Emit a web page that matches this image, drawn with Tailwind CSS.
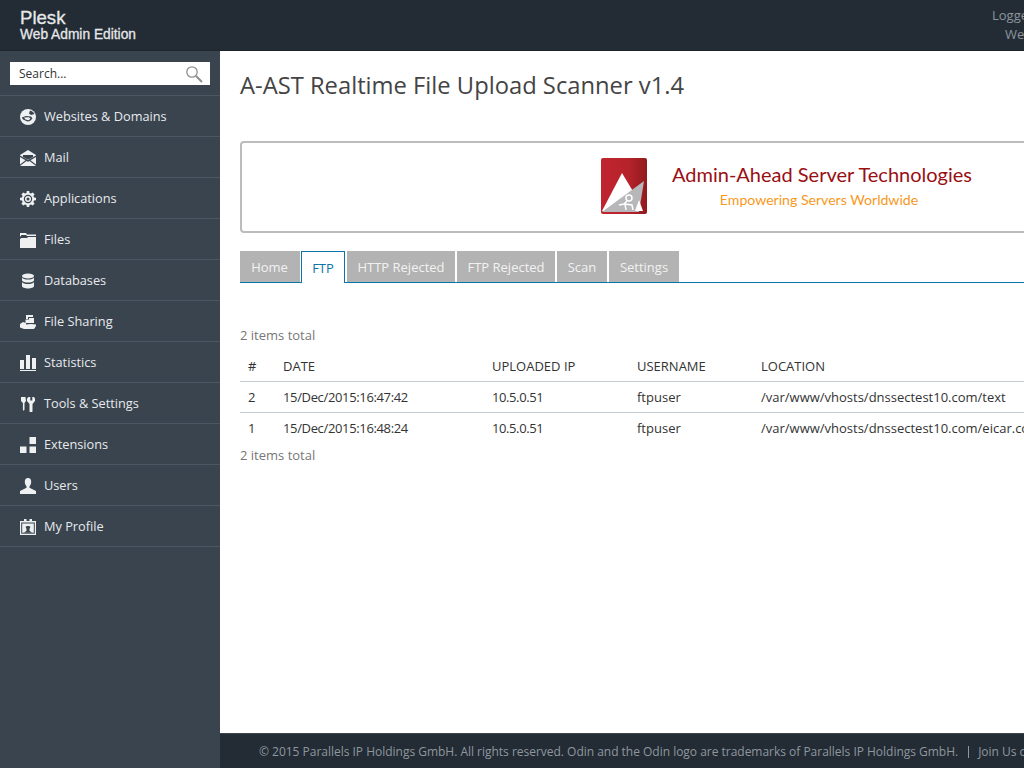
<!DOCTYPE html>
<html lang="en">
<head>
<meta charset="utf-8">
<title>A-AST Realtime File Upload Scanner</title>
<script src="https://cdn.jsdelivr.net/npm/@tailwindcss/browser@4"></script>
</head>
<body class="h-[768px] w-[1024px] overflow-hidden bg-white font-['Open_Sans',sans-serif] text-[13px] text-[#333]">
  <!-- top bar -->
  <header class="flex h-[51px] justify-between overflow-hidden border-b border-[#1d252c] bg-[#232c35]">
    <div class="pl-5 pt-[8px] font-['Liberation_Sans',sans-serif] text-[#e6e8ea] [-webkit-text-stroke:0.3px]">
      <div class="text-[18.6px] leading-[20px]">Plesk</div>
      <div class="text-[13.75px] leading-[14px]">Web Admin Edition</div>
    </div>
    <div class="w-[32px] shrink-0 pt-[6px] text-[13px] leading-[19px] text-[#8d959c]">
      <div class="whitespace-nowrap">Logged in as</div>
      <div class="whitespace-nowrap pl-[13px]">Web Admin</div>
    </div>
  </header>

  <div class="flex h-[717px]">
    <!-- sidebar -->
    <aside class="w-[220px] shrink-0 bg-[#39444f] text-[12.75px] text-[#e8eaec]">
      <div class="h-[45px] border-b border-[#4b5763] px-[10px] pt-[11px]">
        <div class="flex h-[23px] items-center justify-between bg-white pl-[9px] pr-[7px] text-[#333]">
          <span class="text-[12px]">Search...</span>
          <svg class="h-[18px] w-[18px]" viewBox="0 0 18 18" fill="none" stroke="#8e8e8e"><circle cx="7" cy="7" r="5.2" stroke-width="1.3"/><path d="M11 11l6 6" stroke-width="2"/></svg>
        </div>
      </div>
      <nav>
        <a class="flex h-[41px] items-center gap-2 border-b border-[#4b5763] pl-5 pt-[2px]">
          <svg class="h-4 w-4" viewBox="0 0 16 16"><circle cx="8" cy="8" r="8" fill="#eef0f1"/><path d="M10 1.500c2 .5 3.500 1.500 4.500 3.500L11 6 9 4.500zM6 7l5 .5 1.500 2-2.500 2.500-2.500.5L3 10.500 1.800 8.500z" fill="#39444f"/><path d="M4 8.500l5-.2 1.500 1.500-2 1.500-3-.8z" fill="#eef0f1"/></svg>
          <span>Websites &amp; Domains</span>
        </a>
        <a class="flex h-[41px] items-center gap-2 border-b border-[#4b5763] pl-5 pt-[2px]">
          <svg class="h-4 w-4" viewBox="0 0 16 16"><path d="M8 0l8 5v.5L8 10 0 5.500V5z" fill="#eef0f1"/><path d="M3 5h10v2L8 9.800 3 7z" fill="#39444f"/><path d="M0 7l5.500 3.200L0 14.500zM16 7l-5.500 3.200 5.500 4.300zM6.500 11L8 11.800 9.500 11l6 4.500v.5H.5v-.5z" fill="#eef0f1"/></svg>
          <span>Mail</span>
        </a>
        <a class="flex h-[41px] items-center gap-2 border-b border-[#4b5763] pl-5 pt-[2px]">
          <svg class="h-4 w-4" viewBox="0 0 16 16"><path d="M6.800 0h2.400l.3 2 1.500.6L12.700 1.400l1.900 1.900-1.200 1.700.6 1.500 2 .3v2.400l-2 .3-.6 1.500 1.200 1.700-1.900 1.900-1.700-1.200-1.500.6-.3 2H6.800l-.3-2-1.500-.6-1.700 1.200-1.900-1.900 1.200-1.700-.6-1.500-2-.3V6.800l2-.3.6-1.500-1.200-1.700 1.900-1.900L5 2.600l1.500-.6z" fill="#eef0f1"/><circle cx="8" cy="8" r="4.200" fill="#39444f"/><circle cx="8" cy="8" r="3" fill="#eef0f1"/><circle cx="8" cy="8" r="1.500" fill="#39444f"/></svg>
          <span>Applications</span>
        </a>
        <a class="flex h-[41px] items-center gap-2 border-b border-[#4b5763] pl-5 pt-[2px]">
          <svg class="h-4 w-4" viewBox="0 0 16 16"><path d="M0 1h6l1 1.500h9V4H7L6 3H1.500L0 5z" fill="#eef0f1"/><path d="M0 7l1.500-1H7l1-1h8v11H0z" fill="#eef0f1"/></svg>
          <span>Files</span>
        </a>
        <a class="flex h-[41px] items-center gap-2 border-b border-[#4b5763] pl-5 pt-[2px]">
          <svg class="h-4 w-4" viewBox="0 0 16 16" fill="#eef0f1"><ellipse cx="8" cy="3" rx="6" ry="2.500"/><path d="M2 4.500c1 1.500 3 2 6 2s5-.5 6-2v3c-1 1.500-3 2-6 2s-5-.5-6-2zM2 9c1 1.500 3 2 6 2s5-.5 6-2v4c0 1.500-3 2.500-6 2.500S2 14.500 2 13z"/></svg>
          <span>Databases</span>
        </a>
        <a class="flex h-[41px] items-center gap-2 border-b border-[#4b5763] pl-5 pt-[2px]">
          <svg class="h-4 w-4" viewBox="0 0 16 16" fill="#eef0f1"><path d="M6 1h7v2H8v2H6zM9 4h5v5H9zM0 10l3-2 3 1v1.500L11 10l5 .5V12l-2 3H4l-4-1.500z"/><path d="M5.500 5.500H14V9H5.500z"/></svg>
          <span>File Sharing</span>
        </a>
        <a class="flex h-[41px] items-center gap-2 border-b border-[#4b5763] pl-5 pt-[2px]">
          <svg class="h-4 w-4" viewBox="0 0 16 16" fill="#eef0f1"><path d="M0 5h4v9H0zM6 0h4v14H6zM12 3h4v11h-4zM0 15h16v1H0z"/></svg>
          <span>Statistics</span>
        </a>
        <a class="flex h-[41px] items-center gap-2 border-b border-[#4b5763] pl-5 pt-[2px]">
          <svg class="h-4 w-4" viewBox="0 0 16 16" fill="#eef0f1"><path d="M1 1h4.500l.5 4-1.500 2v6.500l-.8 1.500-.8-1.500V7L1 5z"/><path d="M8.500 1l1.800 0v3.500h2V1H14l1 1.500V5l-2.500 3v7a1.500 1.500 0 0 1-3 0V8L7 5V2.500z"/></svg>
          <span>Tools &amp; Settings</span>
        </a>
        <a class="flex h-[41px] items-center gap-2 border-b border-[#4b5763] pl-5 pt-[2px]">
          <svg class="h-4 w-4" viewBox="0 0 16 16" fill="#eef0f1"><path d="M0 9.500h6.500V16H0zM9.500 0H16v7H9.500zM9.500 9.500H16V16H9.500z"/></svg>
          <span>Extensions</span>
        </a>
        <a class="flex h-[41px] items-center gap-2 border-b border-[#4b5763] pl-5 pt-[2px]">
          <svg class="h-4 w-4" viewBox="0 0 16 16" fill="#eef0f1"><path d="M8 0c2.200 0 3.200 1.700 3.200 3.800 0 2-.9 3.700-1.700 4.500v1.500L16 13v3H0v-3l6.500-3.200V8.300C5.700 7.500 4.800 5.800 4.800 3.800 4.800 1.700 5.800 0 8 0z"/></svg>
          <span>Users</span>
        </a>
        <a class="flex h-[41px] items-center gap-2 border-b border-[#4b5763] pl-5 pt-[2px]">
          <svg class="h-4 w-4" viewBox="0 0 16 16"><path d="M4 0h2.500v2h3V0H12v2h4v14H0V2h4z" fill="#eef0f1"/><path d="M1.200 3.500h13.600v11.200H1.200z" fill="#39444f"/><path d="M2.200 4.500h11.600v9.200H2.200z" fill="#eef0f1"/><path d="M4 13.700l2.500-2V10L5.500 7.800c1-1.200 4-1.200 5 0L9.500 10v1.700l2.500 2z" fill="#39444f"/></svg>
          <span>My Profile</span>
        </a>
      </nav>
    </aside>

    <!-- main column -->
    <div class="flex min-w-0 flex-1 flex-col overflow-hidden">
      <main class="flex-1 overflow-hidden pl-5 pt-[17px]">
        <h1 class="whitespace-nowrap text-[23.75px] leading-[34px] text-[#444]">A-AST Realtime File Upload Scanner v1.4</h1>

        <div class="mt-[39px] flex h-[92px] w-[1092px] items-center justify-center rounded-[4px] border-2 border-[#bcbcbc]">
          <div class="mb-[2px] flex items-center gap-[24px]">
            <svg class="h-[58px] w-[48px]" viewBox="0 0 48 58">
              <defs>
                <linearGradient id="logo-red" x1="0" y1="0" x2="1" y2="0">
                  <stop offset="0" stop-color="#c0242e"/>
                  <stop offset=".6" stop-color="#b6232b"/>
                  <stop offset="1" stop-color="#8f1a1e"/>
                </linearGradient>
              </defs>
              <rect x="1" y="1" width="46" height="56" rx="2" fill="url(#logo-red)"/>
              <path d="M2 54L22 16l12 20 5 18z" fill="#fff"/>
              <path d="M2 55L44 24l-5 31z" fill="#b7b7b9"/>
              <path d="M39 43l4 11h-8z" fill="#fff"/>
              <circle cx="29" cy="41" r="3" fill="none" stroke="#fff" stroke-width="1.500"/>
              <path d="M27 44l-3 3-5 1M25 47l1 6M25 47l7 1 1 5" fill="none" stroke="#fff" stroke-width="1.500"/>
            </svg>
            <div class="w-[301px] text-center font-['Lato',sans-serif]">
              <div class="whitespace-nowrap text-[20px] leading-[26px] text-[#990f14]">Admin-Ahead Server Technologies</div>
              <div class="mt-[2px] whitespace-nowrap pr-[6px] text-[14.1px] leading-[22px] text-[#f7981d]">Empowering Servers Worldwide</div>
            </div>
          </div>
        </div>

        <!-- tabs -->
        <ul class="mt-[18px] flex h-[32px] w-[900px] gap-[2px] border-b border-[#0b75a5] text-[13px] text-[#f2f2f2]">
          <li class="flex h-[31px] w-[60px] items-center justify-center bg-[#b3b3b3] pr-px pt-[2px]">Home</li>
          <li class="ml-[-1px] flex h-[32px] w-[44px] items-center justify-center border border-b-0 border-[#0b75a5] bg-white pt-[2px] text-[#0b75a5]">FTP</li>
          <li class="flex h-[31px] w-[108px] items-center justify-center bg-[#b3b3b3] pt-[2px]">HTTP Rejected</li>
          <li class="flex h-[31px] w-[98px] items-center justify-center bg-[#b3b3b3] pt-[2px]">FTP Rejected</li>
          <li class="flex h-[31px] w-[50px] items-center justify-center bg-[#b3b3b3] pt-[2px]">Scan</li>
          <li class="flex h-[31px] w-[70px] items-center justify-center bg-[#b3b3b3] pt-[2px]">Settings</li>
        </ul>

        <p class="mt-[43px] text-[13px] leading-[18px] text-[#777]">2 items total</p>

        <table class="mt-[6px] w-[1000px] table-fixed border-collapse whitespace-nowrap text-left text-[13px]">
          <colgroup>
            <col class="w-[43px]">
            <col class="w-[209px]">
            <col class="w-[145px]">
            <col class="w-[124px]">
            <col>
          </colgroup>
          <thead>
            <tr class="h-[31px] border-b border-[#c4ccd3]">
              <th class="pl-2 pt-[2px] font-normal">#</th>
              <th class="pt-[2px] font-normal">DATE</th>
              <th class="pt-[2px] font-normal">UPLOADED IP</th>
              <th class="pt-[2px] font-normal">USERNAME</th>
              <th class="pt-[2px] font-normal">LOCATION</th>
            </tr>
          </thead>
          <tbody>
            <tr class="h-[31px] border-b border-[#c4ccd3]">
              <td class="pl-2 pt-[2px]">2</td>
              <td class="pt-[2px] tracking-[-0.35px]">15/Dec/2015:16:47:42</td>
              <td class="pt-[2px] tracking-[-0.4px]">10.5.0.51</td>
              <td class="pt-[2px]">ftpuser</td>
              <td class="pt-[2px]">/var/www/vhosts/dnssectest10.com/text</td>
            </tr>
            <tr class="h-[31px]">
              <td class="pl-2 pt-[2px]">1</td>
              <td class="pt-[2px] tracking-[-0.35px]">15/Dec/2015:16:48:24</td>
              <td class="pt-[2px] tracking-[-0.4px]">10.5.0.51</td>
              <td class="pt-[2px]">ftpuser</td>
              <td class="pt-[2px]">/var/www/vhosts/dnssectest10.com/eicar.com</td>
            </tr>
          </tbody>
        </table>

        <p class="mt-[3px] text-[13px] leading-[18px] text-[#777]">2 items total</p>
      </main>

      <footer class="flex h-[35px] shrink-0 items-center whitespace-nowrap border-t border-[#3a4550] bg-[#232c35] pl-[39px] pt-[2px] text-[12px] tracking-[-0.016px] text-[#8f979e]">
        <span>© 2015 Parallels IP Holdings GmbH. All rights reserved. Odin and the Odin logo are trademarks of Parallels IP Holdings GmbH.</span>
        <span class="ml-[10px] border-l border-[#8f979e] pl-[9px] leading-[12px]">Join Us on Facebook</span>
      </footer>
    </div>
  </div>
</body>
</html>
